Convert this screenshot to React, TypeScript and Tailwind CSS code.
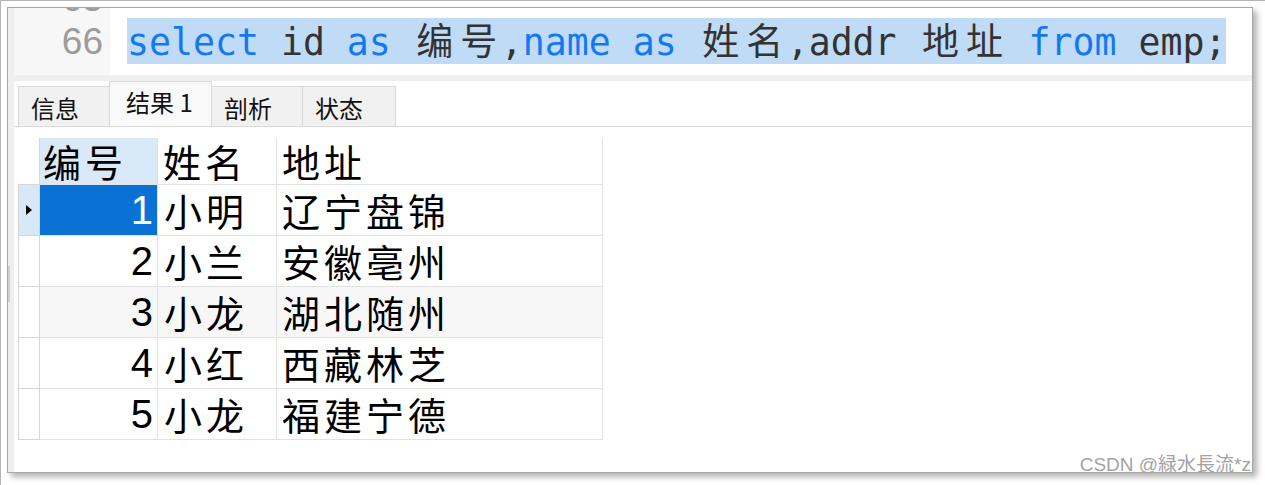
import React from 'react';

type Tok = { t: string; k?: boolean };

const sql: Tok[] = [
  { t: 'select', k: true },
  { t: ' id ' },
  { t: 'as', k: true },
  { t: ' 编号,' },
  { t: 'name', k: true },
  { t: ' ' },
  { t: 'as', k: true },
  { t: ' 姓名,addr 地址 ' },
  { t: 'from', k: true },
  { t: ' emp;' },
];

const rows = [
  { id: 1, name: '小明', addr: '辽宁盘锦' },
  { id: 2, name: '小兰', addr: '安徽亳州' },
  { id: 3, name: '小龙', addr: '湖北随州' },
  { id: 4, name: '小红', addr: '西藏林芝' },
  { id: 5, name: '小龙', addr: '福建宁德' },
];

const tabs = [
  { label: '信息', w: 'w-[92px]' },
  { label: '结果 1', w: 'w-[103px]', active: true },
  { label: '剖析', w: 'w-[92px]' },
  { label: '状态', w: 'w-[94px]' },
];

const isCjk = (ch: string) => ch.charCodeAt(0) > 0x2e80;

function CodeText({ text, keyword }: { text: string; keyword?: boolean }) {
  return (
    <span className={keyword ? 'text-[#1479f0]' : 'text-[#333333]'}>
      {text.split('').map((ch, i) =>
        isCjk(ch) ? (
          <span key={i} className="inline-block w-[44px] text-center text-[37px] font-['Noto_Sans_CJK_SC',sans-serif]">
            {ch}
          </span>
        ) : (
          <span key={i}>{ch}</span>
        )
      )}
    </span>
  );
}

function Editor() {
  return (
    <div className="flex h-[67px] overflow-hidden">
      <div className="w-[96px] bg-[#f7f7f7] pr-[7px] text-right text-[37px] leading-[43px] text-[#9c9c9c] font-['Liberation_Sans',sans-serif]">
        <div className="-mt-[31px]">
          <div className="h-[43px]">65</div>
          <div className="h-[43px]">66</div>
        </div>
      </div>
      <div className="flex-1 bg-white pl-[17px]">
        <div className="-mt-[34px]">
          <div className="h-[43px]" />
          <div className="mt-[1px] h-[43px] leading-[43px] whitespace-pre text-[36.5px] font-['DejaVu_Sans_Mono','Noto_Sans_CJK_SC',monospace]">
            <span className="inline-block bg-[#c0dbf6]">
              {sql.map((tok, i) => (
                <CodeText key={i} text={tok.t} keyword={tok.k} />
              ))}
            </span>
          </div>
        </div>
      </div>
    </div>
  );
}

function Tabs() {
  return (
    <div className="flex items-end h-[46px] bg-white pl-[4px] border-b border-[#dadada]">
      {tabs.map((tab) => (
        <div
          key={tab.label}
          className={`${tab.w} flex items-center border border-b-0 border-[#d9d9d9] -ml-px first:ml-0 text-[24px] leading-none text-[#111111] font-['Noto_Sans_CJK_SC',sans-serif] ${
            tab.active ? 'h-[45px] bg-[#f9f9f9] pb-[4px] pl-4' : 'h-[40px] bg-[#f1f1f1] pt-[2px] pl-3'
          }`}
        >
          {tab.label}
        </div>
      ))}
    </div>
  );
}

function Grid() {
  const cjkCell = "font-['Noto_Sans_CJK_SC',sans-serif] text-[38px] leading-none tracking-[4px] text-black";
  return (
    <div className="grid grid-cols-[22px_118px_119px_326px] w-fit">
      <div className="h-[47px] border-r border-b border-[#d6d6d6]" />
      <div className={`h-[47px] flex items-center pl-[3px] bg-[#d9e9f8] border-r border-b border-[#e2e2e2] ${cjkCell}`}>编号</div>
      <div className={`h-[47px] flex items-center pl-[5px] border-r border-b border-[#e2e2e2] ${cjkCell}`}>姓名</div>
      <div className={`h-[47px] flex items-center pl-[5px] border-r border-b border-[#e2e2e2] ${cjkCell}`}>地址</div>
      {rows.map((r, i) => {
        const first = i === 0;
        const stripe = i === 2 ? 'bg-[#f7f7f7]' : 'bg-white';
        return (
          <React.Fragment key={r.id}>
            <div
              className={`h-[51px] flex items-center justify-center border-l border-r border-b border-[#d6d6d6] ${
                first ? 'bg-[#d9e8f7]' : 'bg-white'
              }`}
            >
              {first && (
                <svg width="6" height="10" viewBox="0 0 6 10">
                  <path d="M0 0 L6 5 L0 10 Z" fill="#000" />
                </svg>
              )}
            </div>
            <div
              className={`h-[51px] flex items-center justify-end pr-[4px] border-r border-b border-[#e2e2e2] text-[40px] leading-none font-['Liberation_Sans',sans-serif] ${
                first ? 'bg-[#0a72d4] text-white' : `${stripe} text-black`
              }`}
            >
              {r.id}
            </div>
            <div className={`h-[51px] flex items-center pl-[6px] border-r border-b border-[#e2e2e2] ${stripe} ${cjkCell}`}>
              {r.name}
            </div>
            <div className={`h-[51px] flex items-center pl-[5px] border-r border-b border-[#e2e2e2] ${stripe} ${cjkCell}`}>
              {r.addr}
            </div>
          </React.Fragment>
        );
      })}
    </div>
  );
}

export default function App() {
  return (
    <div className="relative w-[1265px] h-[485px] bg-white border-l border-t border-[#b4b4b4] pl-[6px] pt-[6px]">
      <div className="flex w-[1246px] h-[466px] border border-[#a8a8a8] bg-white shadow-[4px_4px_6px_rgba(0,0,0,0.3)]">
        <div className="w-[6px] bg-[#efefef] flex flex-col">
          <div className="h-[258px]" />
          <div className="w-[2px] h-[36px] bg-[#d0d0d0]" />
        </div>
        <div className="flex-1 flex flex-col">
          <Editor />
          <div className="h-[6px] bg-[#efefef]" />
          <Tabs />
          <div className="flex-1 bg-white pl-[4px] pt-[11px]">
            <Grid />
          </div>
        </div>
      </div>
      <div className="absolute right-[14px] top-[452px] text-[19px] leading-[24px] text-[#a3a3a3] font-['Liberation_Sans','Noto_Sans_CJK_JP',sans-serif]">
        CSDN @緑水長流*z
      </div>
    </div>
  );
}
